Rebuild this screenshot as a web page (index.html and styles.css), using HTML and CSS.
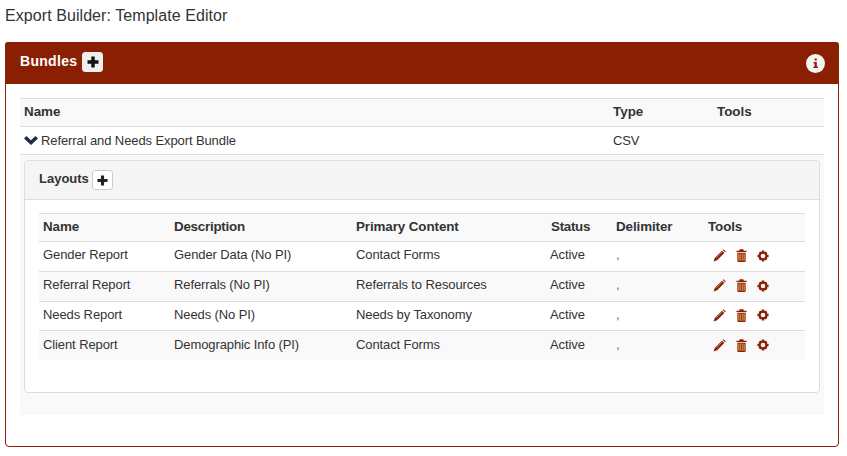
FILE: index.html
```html
<!DOCTYPE html>
<html lang="en">
<head>
<meta charset="utf-8">
<title>Export Builder</title>
<link rel="stylesheet" href="styles.css">
</head>
<body>
<svg width="0" height="0" class="defs">
  <symbol id="plus" viewBox="0 0 12 12"><path d="M4.300 0.500h3.400v3.800h3.800v3.400H7.700v3.800H4.300V7.700H0.500V4.300h3.800z"/></symbol>
  <symbol id="pencil" viewBox="0 0 14 14"><path d="M1.900 9.600 9.700 1.800 12.200 4.300 4.400 12.100 .6 13.400z"/><path d="M10.500 1 11.400 .2 13.800 2.600 13 3.500z"/><path d="M3.200 9.800 9.900 3.100" stroke="#d89a78" stroke-width=".8" fill="none"/></symbol>
  <symbol id="trash" viewBox="0 0 12 14"><path d="M4 .3h4l.5 1.500h3v1.300H.5V1.800h3z"/><path d="M1.500 4h9v9a1 1 0 0 1-1 1h-7a1 1 0 0 1-1-1z"/><path d="M2.500 5h7v7.800h-7z" fill="#d99a52"/><path d="M4.200 5v7.800M6 5v7.800M7.800 5v7.800" stroke="#8a1f03" stroke-width=".8" fill="none"/></symbol>
  <symbol id="gear" viewBox="0 0 14 14"><circle cx="7" cy="7" r="3.900" fill="none" stroke="currentColor" stroke-width="2.400"/><path d="M5.500 .5h3v2.500h-3zM5.500 11h3v2.500h-3zM.5 5.500H3v3H.5zM11 5.500h2.500v3H11zM1.800 3.900 3.900 1.800 5.300 3.200 3.200 5.300zM8.700 3.200 10.100 1.800 12.200 3.900 10.800 5.300zM1.800 10.100 3.200 8.700 5.300 10.800 3.900 12.200zM8.700 10.800 10.800 8.700 12.200 10.100 10.100 12.200z"/></symbol>
  <symbol id="chevron" viewBox="0 0 14 9"><path d="M2.500 0 7 4.300 11.500 0 14 2.500 7 9 0 2.500z"/></symbol>
  <symbol id="info" viewBox="0 0 19 19"><circle cx="9.500" cy="9.500" r="9.500" fill="#f6f4f4"/><path d="M8.600 4.600h2.200v2h-2.200zM7.500 8h3.300v4.600h1.100v1.500H7.500v-1.500h1.100V9.500H7.500z" fill="#8a1f03"/></symbol>
</svg>

<h1 class="page-title">Export Builder: Template Editor</h1>

<section class="panel">
  <header class="panel-heading">
    <div class="heading-left">
      <span class="heading-title">Bundles</span>
      <button class="add-btn add-btn-main" type="button"><svg class="icon-plus"><use href="#plus"/></svg></button>
    </div>
    <svg class="info-badge"><use href="#info"/></svg>
  </header>
  <div class="panel-body">
    <table class="bundles">
      <colgroup><col class="b-name"><col class="b-type"><col></colgroup>
      <thead>
        <tr><th>Name</th><th>Type</th><th>Tools</th></tr>
      </thead>
      <tbody>
        <tr>
          <td><svg class="icon-chevron"><use href="#chevron"/></svg>Referral and Needs Export Bundle</td>
          <td>CSV</td>
          <td></td>
        </tr>
        <tr class="detail-row">
          <td colspan="3">
            <div class="subpanel">
              <div class="subpanel-heading">
                <span class="sub-title">Layouts</span>
                <button class="add-btn add-btn-sub" type="button"><svg class="icon-plus-sub"><use href="#plus"/></svg></button>
              </div>
              <div class="subpanel-body">
                <table class="layouts">
                  <colgroup><col class="l-name"><col class="l-desc"><col class="l-content"><col class="l-status"><col class="l-delim"><col></colgroup>
                  <thead>
                    <tr><th>Name</th><th class="th-desc">Description</th><th>Primary Content</th><th class="th-status">Status</th><th>Delimiter</th><th>Tools</th></tr>
                  </thead>
                  <tbody>
                    <tr class="h30"><td>Gender Report</td><td>Gender Data (No PI)</td><td>Contact Forms</td><td>Active</td><td><a class="delim" href="#">,</a></td><td class="tools"><svg class="t-pencil"><use href="#pencil"/></svg><svg class="t-trash"><use href="#trash"/></svg><svg class="t-gear"><use href="#gear"/></svg></td></tr>
                    <tr class="h30"><td>Referral Report</td><td>Referrals (No PI)</td><td>Referrals to Resources</td><td>Active</td><td><a class="delim" href="#">,</a></td><td class="tools"><svg class="t-pencil"><use href="#pencil"/></svg><svg class="t-trash"><use href="#trash"/></svg><svg class="t-gear"><use href="#gear"/></svg></td></tr>
                    <tr class="h29"><td>Needs Report</td><td>Needs (No PI)</td><td>Needs by Taxonomy</td><td>Active</td><td><a class="delim" href="#">,</a></td><td class="tools"><svg class="t-pencil"><use href="#pencil"/></svg><svg class="t-trash"><use href="#trash"/></svg><svg class="t-gear"><use href="#gear"/></svg></td></tr>
                    <tr class="h29 last-row"><td>Client Report</td><td>Demographic Info (PI)</td><td>Contact Forms</td><td>Active</td><td><a class="delim" href="#">,</a></td><td class="tools"><svg class="t-pencil"><use href="#pencil"/></svg><svg class="t-trash"><use href="#trash"/></svg><svg class="t-gear"><use href="#gear"/></svg></td></tr>
                  </tbody>
                </table>
              </div>
            </div>
          </td>
        </tr>
      </tbody>
    </table>
  </div>
</section>
</body>
</html>
```
FILE: styles.css
```css
* { box-sizing: border-box; }
html, body { margin: 0; padding: 0; }
body {
  width: 847px;
  height: 456px;
  overflow: hidden;
  background: #fff;
  color: #333;
  font-family: "Liberation Sans", Arial, sans-serif;
  font-size: 13px;
  line-height: 20px;
  padding: 0 8px 0 5px;
}
.defs { position: absolute; }
.page-title {
  margin: 0;
  padding-top: 6px;
  height: 42px;
  font-size: 16px;
  font-weight: 400;
  line-height: 20px;
  letter-spacing: .07px;
}
.panel {
  width: 834px;
  height: 405px;
  border: 1px solid #8a1f03;
  border-radius: 4px;
}
.panel-heading {
  height: 42px;
  margin: -1px -1px 0;
  background: #8a1f03;
  border-radius: 3px 3px 0 0;
  color: #fff;
  display: flex;
  align-items: center;
  justify-content: space-between;
  padding: 0 14px 0 15px;
}
.heading-left { display: flex; align-items: center; gap: 5px; margin-bottom: 2px; }
.heading-title { font-weight: 700; font-size: 14px; letter-spacing: .3px; position: relative; top: -1px; }
.add-btn {
  padding: 0;
  display: flex;
  align-items: center;
  justify-content: center;
  border-radius: 3px;
}
.add-btn-main {
  width: 21px;
  height: 20px;
  background: #eee;
  border: 1px solid #eee;
}
.add-btn-sub {
  width: 21px;
  height: 20px;
  background: #fff;
  border: 1px solid #ccc;
}
.icon-plus { width: 12px; height: 12px; fill: #111; }
.icon-plus-sub { width: 11px; height: 11px; fill: #222; }
.info-badge { width: 19px; height: 19px; }
.panel-body { padding: 14px 14px 0; }
table { border-collapse: collapse; table-layout: fixed; width: 100%; }
th { text-align: left; font-weight: 700; font-size: 13.4px; }
td { letter-spacing: -.1px; }
.bundles { width: 804px; }
.b-name { width: 589px; }
.b-type { width: 104px; }
.bundles > thead > tr { height: 28px; background: #f9f9f9; }
.bundles > thead th {
  padding: 0 4px 2px;
  border-top: 1px solid #ddd;
  border-bottom: 1px solid #ddd;
  vertical-align: middle;
}
.bundles > tbody > tr:first-child { height: 28px; }
.bundles > tbody > tr:first-child td {
  padding: 0 4px;
  border-bottom: 1px solid #ddd;
  vertical-align: middle;
}
.icon-chevron {
  width: 14px;
  height: 9px;
  fill: #1f2d3d;
  margin: 0 3px 1px 0;
  vertical-align: middle;
}
.detail-row > td {
  background: #f9f9f9;
  padding: 5px 4px 21px;
  height: 260px;
  vertical-align: top;
}
.subpanel {
  height: 233px;
  background: #fff;
  border: 1px solid #ddd;
  border-radius: 4px;
}
.subpanel-heading {
  height: 39px;
  background: #f5f5f5;
  border-bottom: 1px solid #ddd;
  border-radius: 3px 3px 0 0;
  display: flex;
  align-items: center;
  gap: 3px;
  padding: 0 14px;
}
.sub-title { font-weight: 700; position: relative; top: -1px; letter-spacing: 0; }
.subpanel-body { padding: 13px 14px 0; }
.layouts { width: 766px; }
.l-name { width: 131px; }
.l-desc { width: 182px; }
.l-content { width: 194px; }
.l-status { width: 66px; }
.l-delim { width: 92px; }
.layouts th, .layouts td { padding: 0 4px; vertical-align: middle; }
.layouts thead tr { height: 28px; background: #f9f9f9; }
.layouts th {
  border-top: 1px solid #ddd;
  border-bottom: 1px solid #ddd;
  padding-bottom: 2px;
}
.layouts th.th-desc { letter-spacing: -.25px; }
.layouts th.th-status { padding-left: 5px; letter-spacing: -.3px; }
.layouts tbody td { border-top: 1px solid #ddd; padding-bottom: 3px; }
.layouts tbody tr:first-child td { border-top: 0; }
.layouts tbody .last-row td { padding-bottom: 1px; }
.h30 { height: 30px; }
.h29 { height: 29px; }
.layouts tbody tr:nth-child(even) { background: #f9f9f9; }
.delim { color: #337ab7; text-decoration: none; }
.layouts tbody td.tools { white-space: nowrap; padding: 0 0 2px 9px; font-size: 0; line-height: 0; }
.layouts tbody .last-row td.tools { padding-bottom: 0; }
.tools svg { fill: #8a1f03; color: #8a1f03; vertical-align: middle; }
.t-pencil { width: 13px; height: 13px; margin-right: 10px; }
.t-trash { width: 11px; height: 13px; margin-right: 10px; }
.t-gear { width: 12px; height: 12px; }
```
